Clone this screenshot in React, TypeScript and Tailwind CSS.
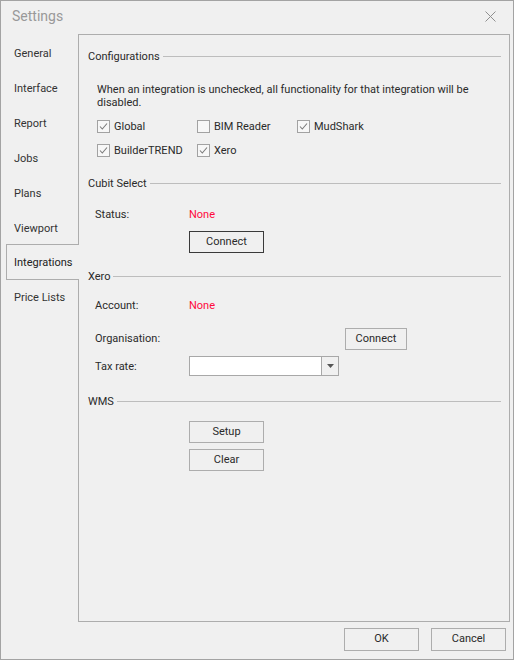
import React from 'react';

const FONT = "font-['Roboto','Liberation_Sans',sans-serif]";

const tabs = ['General', 'Interface', 'Report', 'Jobs', 'Plans', 'Viewport', 'Integrations', 'Price Lists'];

const Check: React.FC<{ label: string; checked?: boolean }> = ({ label, checked }) => (
  <div className="flex items-center w-[100px] h-[13px]">
    <div className="w-[13px] h-[13px] border border-[#a2a2a2] bg-[#f7f7f7] flex items-center justify-center shrink-0">
      {checked && (
        <svg width="11" height="11" viewBox="0 0 11 11">
          <path d="M2 5.5 L4.3 8 L9 2.5" fill="none" stroke="#7a7a7a" strokeWidth="1.1" />
        </svg>
      )}
    </div>
    <span className="ml-[4px] leading-none whitespace-nowrap">{label}</span>
  </div>
);

const Group: React.FC<{ title: string; className?: string }> = ({ title, className }) => (
  <div className={`flex items-center h-[16px] pl-[9px] pr-[8px] ${className ?? ''}`}>
    <span className="whitespace-nowrap pt-[2px]">{title}</span>
    <div className="flex-1 h-px bg-[#bdbdbd] ml-[3px]" />
  </div>
);

const Btn: React.FC<{ label: string; className?: string; focused?: boolean }> = ({ label, className, focused }) => (
  <div
    className={`flex items-center justify-center border bg-[#f0f0f0] ${
      focused ? 'border-[#3a3a3a]' : 'border-[#adadad]'
    } ${className ?? ''}`}
  >
    {label}
  </div>
);

const App: React.FC = () => {
  return (
    <div className={`w-[514px] h-[660px] bg-[#f0f0f0] border border-[#a3a3a3] flex flex-col text-[11px] text-[#2a2a2a] ${FONT}`}>
      {/* Title bar */}
      <div className="h-[33px] flex items-center justify-between pl-[11px] pr-[17px] shrink-0">
        <span className="text-[14px] text-[#999] pb-[2px]">Settings</span>
        <svg width="11" height="11" viewBox="0 0 11 11" className="mb-[3px]">
          <path d="M0.5 0.5 L10.5 10.5 M10.5 0.5 L0.5 10.5" stroke="#8f8f8f" strokeWidth="1" />
        </svg>
      </div>

      {/* Body */}
      <div className="flex h-[588px] shrink-0">
        {/* Tabs */}
        <div className="w-[77px] shrink-0 pt-px flex flex-col">
          {tabs.map((t) =>
            t === 'Integrations' ? (
              <div
                key={t}
                className="relative z-10 ml-[5px] -mr-px -mt-px h-[36px] bg-[#f0f0f0] border-l border-t border-b border-[#adadad] flex items-center pl-[7px] pt-[2px] text-[#222]"
              >
                {t}
              </div>
            ) : (
              <div
                key={t}
                className={`h-[35px] flex items-center pl-[13px] pt-[3px] text-[#333] ${t === 'Price Lists' ? '-mt-px' : ''}`}
              >
                {t}
              </div>
            )
          )}
        </div>

        {/* Panel */}
        <div className="w-[432px] border border-[#adadad] flex flex-col">
          <Group title="Configurations" className="mt-[13px]" />
          <div className="pl-[18px] mt-[19px] leading-[13px] whitespace-nowrap">
            When an integration is unchecked, all functionality for that integration will be
            <br />
            disabled.
          </div>
          <div className="pl-[18px] mt-[11px] flex">
            <Check label="Global" checked />
            <Check label="BIM Reader" />
            <Check label="MudShark" checked />
          </div>
          <div className="pl-[18px] mt-[11px] flex">
            <Check label="BuilderTREND" checked />
            <Check label="Xero" checked />
          </div>

          <Group title="Cubit Select" className="mt-[18px]" />
          <div className="pl-[16px] mt-[15px] h-[16px] flex items-center pt-[2px]">
            <span className="w-[94px]">Status:</span>
            <span className="text-[#ff0a3c]">None</span>
          </div>
          <div className="pl-[110px] mt-[9px]">
            <Btn label="Connect" focused className="w-[75px] h-[22px]" />
          </div>

          <Group title="Xero" className="mt-[15px]" />
          <div className="pl-[16px] mt-[13px] h-[16px] flex items-center pt-[2px]">
            <span className="w-[94px]">Account:</span>
            <span className="text-[#ff0a3c]">None</span>
          </div>
          <div className="pl-[16px] mt-[15px] h-[22px] flex items-center">
            <span className="w-[250px]">Organisation:</span>
            <Btn label="Connect" className="w-[62px] h-[22px]" />
          </div>
          <div className="pl-[16px] mt-[6px] h-[20px] flex items-center">
            <span className="w-[94px] pt-[3px]">Tax rate:</span>
            <div className="w-[150px] h-[20px] border border-[#a8a8a8] bg-white flex">
              <div className="flex-1" />
              <div className="w-[17px] border-l border-[#a8a8a8] bg-[#f0f0f0] flex items-center justify-center">
                <svg width="7" height="4" viewBox="0 0 7 4">
                  <path d="M0 0 H7 L3.5 4 Z" fill="#555" />
                </svg>
              </div>
            </div>
          </div>

          <Group title="WMS" className="mt-[17px]" />
          <div className="pl-[110px] mt-[12px] flex flex-col gap-[6px]">
            <Btn label="Setup" className="w-[75px] h-[22px]" />
            <Btn label="Clear" className="w-[75px] h-[22px]" />
          </div>
        </div>
      </div>

      {/* Footer buttons */}
      <div className="flex justify-end gap-[12px] pr-[7px] mt-[6px]">
        <Btn label="OK" className="w-[75px] h-[23px]" />
        <Btn label="Cancel" className="w-[75px] h-[23px]" />
      </div>
    </div>
  );
};

export default App;
